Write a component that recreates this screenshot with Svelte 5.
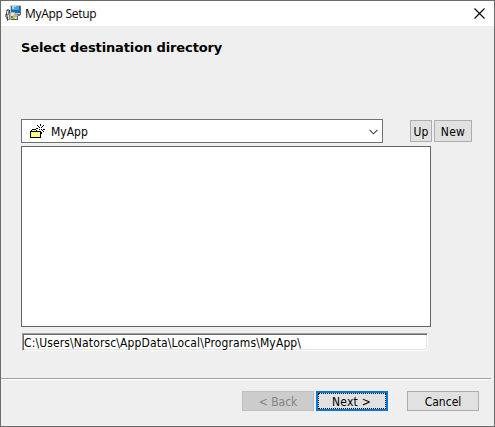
<script>
  const title = 'MyApp Setup';
  const folder = 'MyApp';
  let path = $state('C:\\Users\\Natorsc\\AppData\\Local\\Programs\\MyApp\\');
</script>

<main class="window">
  <header class="titlebar">
    <svg class="app-icon" width="16" height="17" viewBox="0 0 16 17" shape-rendering="crispEdges">
      <path fill="#d0ccc4" d="M5 0h11v9H5z" />
      <path fill="#176ab5" d="M6 1h9v7H6z" />
      <path fill="#46a4dd" d="M7 1h7v4H7z" />
      <path fill="#a2dcf5" d="M7 1h4v1H9v2H7z" />
      <path fill="#686c70" d="M15 1h1v8h-1zM10 9h6v1h-6zM13 10h2v1h-2z" />
      <path fill="#8a8a8a" d="M1 5h1V4h2v2h1v9H3v1H2v-2H1v-2H0V9h1z" />
      <path fill="#444" d="M2 5h1v1H2zM1 8h1v2H1zM2 12h1v3H2zM4 5h1v3H4z" />
      <path fill="#ddd" d="M2 6h1v3H2zM3 10h1v4H3z" />
      <path fill="#b5b5ad" d="M5 7h4l4 4v4H5z" />
      <path fill="#e8e5ce" d="M6 8h3v3H6zM10 12h2v3h-2z" />
      <path fill="#36a348" d="M6 11h3v2H6z" />
      <path fill="#d4c435" d="M8 10h2v3H8zM6 13h2v1H6z" />
      <path fill="#555" d="M12 11h1v4H6v-1h6z" />
    </svg>
    <span class="title">{title}</span>
    <svg class="close" width="11" height="11" viewBox="0 0 11 11">
      <path d="M.5.5l10 10M10.5.5l-10 10" stroke="#000" stroke-width="1.1" />
    </svg>
  </header>

  <section class="body">
    <h1>Select destination directory</h1>
    <div class="picker">
      <div class="combo">
        <svg class="folder" width="16" height="16" viewBox="0 0 16 16" shape-rendering="crispEdges">
          <path fill="#ffff60" d="M2 6h4v1h4v7H1V7h1z" />
          <path fill="#000" d="M2 5h4v1H2zM1 6h1v1H1zM6 6h1v1H6zM0 7h11v1H0zM0 7h1v7H0zM10 7h1v7h-1zM0 13h11v1H0z" />
          <path fill="#fff" d="M2 9h1v1H2zM4 9h1v1H4zM6 9h1v1H6zM8 9h1v1H8zM3 11h1v1H3zM5 11h1v1H5zM7 11h1v1H7z" />
          <path fill="#000" d="M10 0h1v2h-1zM7 1h1v1H7zM8 2h1v1H8zM9 3h1v1H9zM13 1h1v1h-1zM12 2h1v1h-1zM11 3h1v1h-1zM6 4h2v1H6zM13 5h2v1h-2zM9 5h1v1H9zM11 5h1v1h-1zM12 6h1v1h-1zM13 7h1v1h-1zM11 8h1v2h-1z" />
        </svg>
        <span class="name">{folder}</span>
        <svg class="chevron" width="9" height="6" viewBox="0 0 9 6">
          <path d="M.5.8l4 4 4-4" fill="none" stroke="#444" stroke-width="1.1" />
        </svg>
      </div>
      <button class="up">Up</button>
      <button class="new">New</button>
    </div>
    <div class="list"></div>
    <input class="path" bind:value={path} spellcheck="false" />
  </section>

  <footer>
    <button class="back" disabled>&lt; Back</button>
    <button class="next">Next &gt;</button>
    <button class="cancel">Cancel</button>
  </footer>
</main>

<style>
  :global(body) { margin: 0; }
  * { box-sizing: border-box; }
  .window {
    width: 495px;
    height: 427px;
    border: 1px solid #6b6b6b;
    background: #efefef;
    display: flex;
    flex-direction: column;
    font: 12px/14px "DejaVu Sans Condensed", "DejaVu Sans", sans-serif;
    color: #000;
    overflow: hidden;
  }
  .titlebar {
    height: 25px;
    flex: none;
    background: #fff;
    display: flex;
    align-items: center;
    padding: 0 9px 0 4px;
  }
  .title {
    margin-left: 4px;
    font: 12px/16px "Open Sans", "Noto Sans", sans-serif;
    letter-spacing: -0.28px;
    white-space: nowrap;
  }
  .app-icon { margin-top: -1px; }
  .close { margin: -1px 0 0 auto; }
  .body {
    height: 352px;
    flex: none;
    padding: 14px 0 0 20px;
  }
  h1 {
    margin: 0 0 63px;
    font: bold 13px/16px "DejaVu Sans", sans-serif;
    letter-spacing: -0.12px;
    white-space: nowrap;
  }
  .picker {
    display: flex;
    align-items: center;
    height: 24px;
  }
  .combo {
    width: 362px;
    height: 24px;
    border: 1px solid #707070;
    background: #fff;
    display: flex;
    align-items: center;
    padding: 0 4px 0 8px;
    margin-right: 27px;
  }
  .folder { margin-top: 2px; }
  .name { margin-left: 5px; padding-top: 2px; }
  .chevron { margin: 1px 0 0 auto; }
  button {
    height: 20px;
    width: 72px;
    padding: 1px 0 0;
    border: 1px solid #adadad;
    border-radius: 0;
    background: #e1e1e1;
    color: #000;
    font: inherit;
    text-align: center;
    white-space: nowrap;
  }
  .picker button { height: 22px; padding-top: 2px; }
  .picker .up { width: 22px; margin-right: 2px; }
  .picker .new { width: 38px; letter-spacing: 0.3px; }
  .list {
    width: 410px;
    height: 181px;
    margin-top: 3px;
    border: 1px solid #646464;
    background: #fff;
  }
  .path {
    display: block;
    width: 406px;
    height: 18px;
    margin: 6px 0 0 1px;
    padding: 2px 0 0;
    border: 1px solid;
    border-color: #a0a0a0 #fff #fff #a0a0a0;
    border-radius: 0;
    outline: none;
    background: #fff;
    box-shadow: inset 1px 1px #696969, inset -1px -1px #e3e3e3;
    font: inherit;
    letter-spacing: 0.13px;
    color: #000;
    text-indent: 1px;
  }
  footer {
    width: 490px;
    height: 47px;
    border-top: 1px solid #a0a0a0;
    box-shadow: inset 0 1px #fff;
    display: flex;
    padding: 12px 12px 0 0;
    justify-content: flex-end;
  }
  .back {
    margin-right: 2px;
    background: #ccc;
    border-color: #bfbfbf;
    color: #838383;
  }
  .next {
    margin-right: 19px;
    padding: 1px 1px 0 0;
    border: 2px solid #0078d7;
    letter-spacing: 0.2px;
    outline: 1px dotted #000;
    outline-offset: -3px;
  }
</style>
